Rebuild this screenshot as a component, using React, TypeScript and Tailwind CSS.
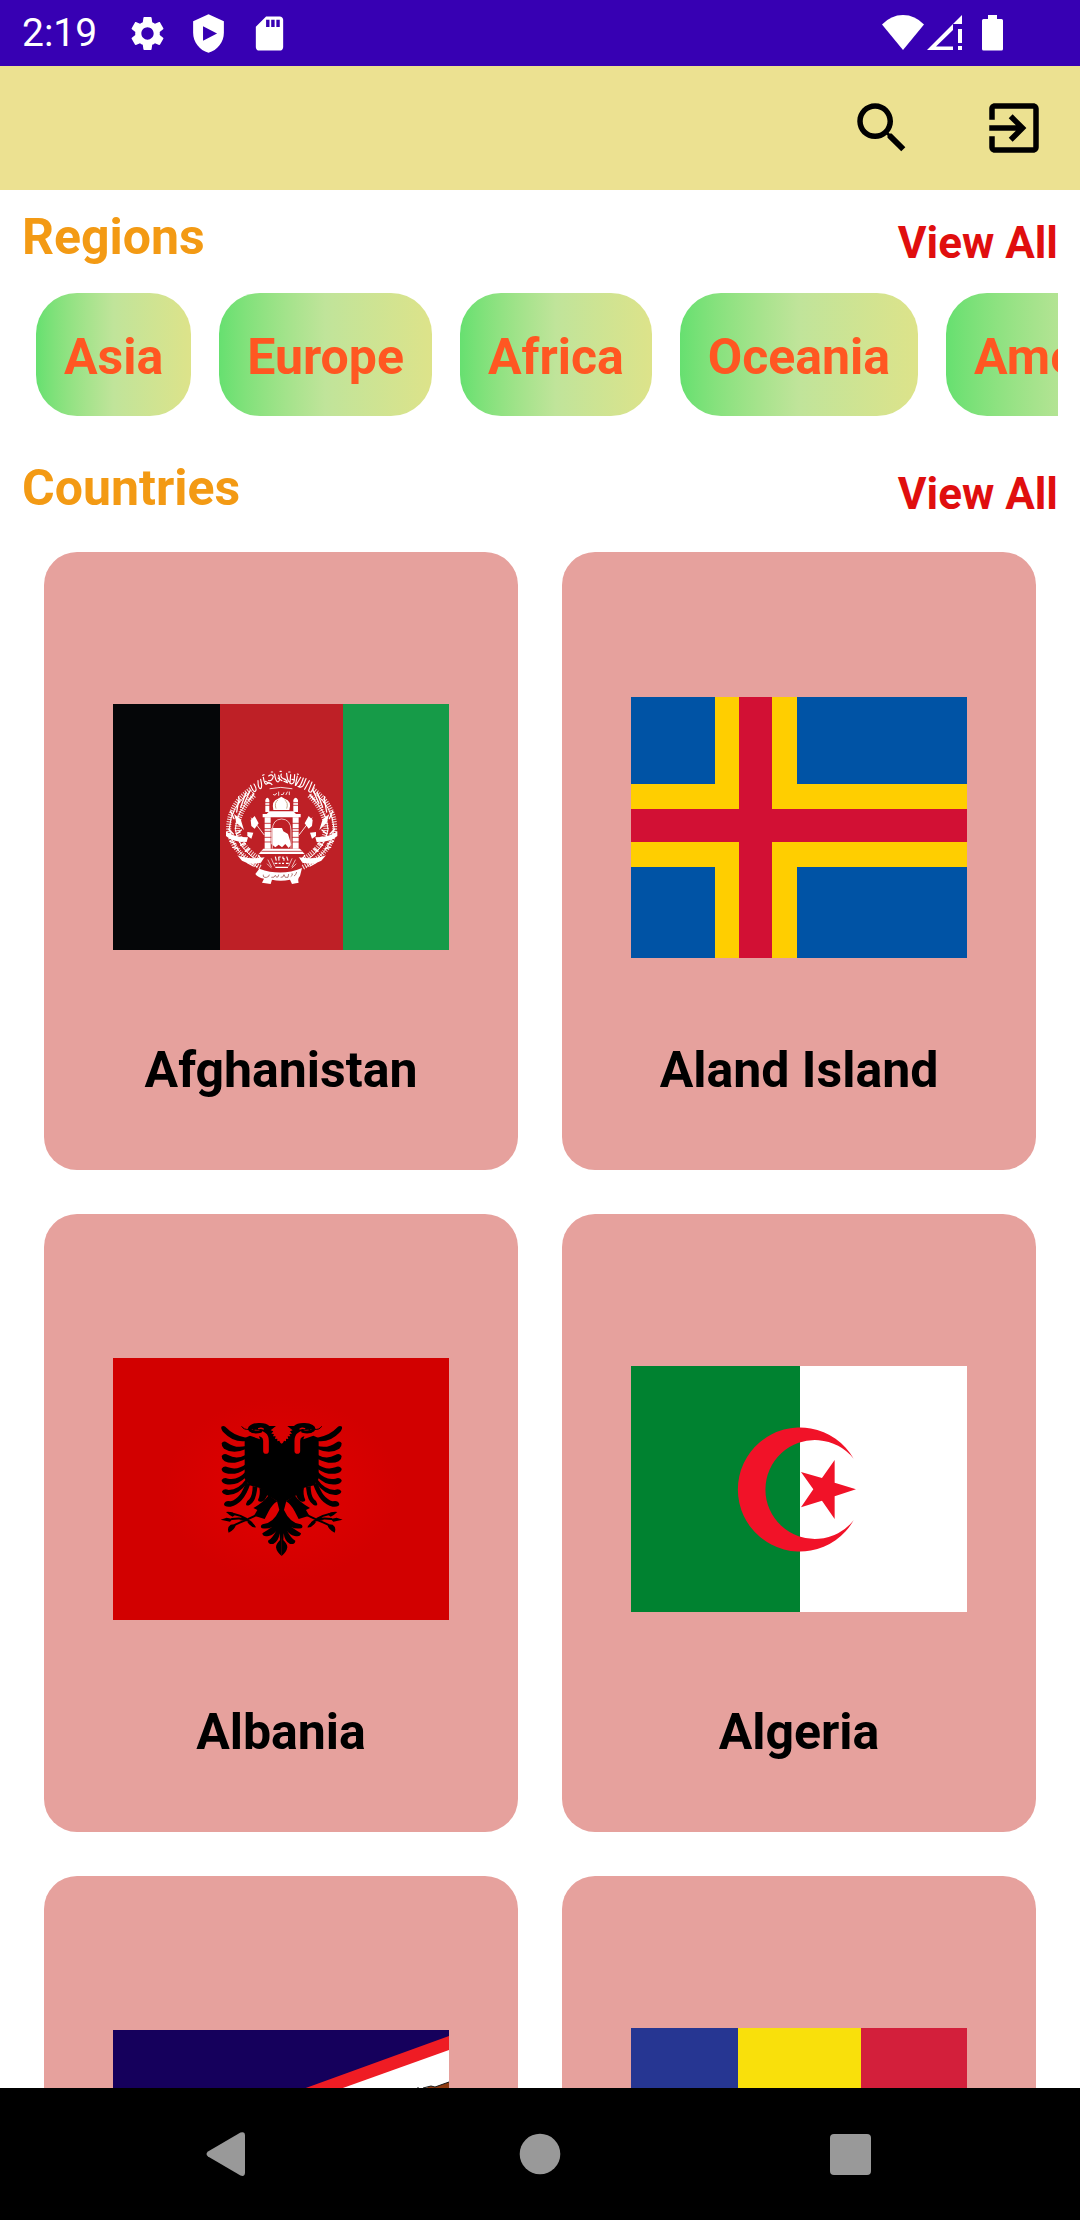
import type { ReactNode } from "react";

const regions = ["Asia", "Europe", "Africa", "Oceania", "Americas"];

function FlagFrame({ height, label, children }: { height: number; label: string; children: ReactNode }) {
  return (
    <svg viewBox={`0 0 336 ${height}`} role="img" aria-label={label} className="block w-full">
      {children}
    </svg>
  );
}

/* Left half of the wreath: wheat ears, ribbon and pennant. */
function WreathHalf() {
  return (
    <g fill="none" stroke="#fff" strokeLinecap="round">
      <path d="M118 128 Q62 170 58 235 Q62 300 140 350" strokeWidth="3" />
      <path d="M128 140 Q78 185 76 238 Q80 292 150 338" strokeWidth="3" />
      <path d="M122 118 Q56 165 56 235 Q60 304 152 352" strokeWidth="15" strokeDasharray="3 4" strokeLinecap="butt" opacity="0.85" />
      <path d="M132 136 Q84 182 82 236 Q86 290 158 334" strokeWidth="16" strokeDasharray="3 4" strokeLinecap="butt" opacity="0.85" />
      <path d="M92 172 l16 -44 M104 158 l16 -36 M80 186 l6 -34 M116 150 l14 -16 M72 206 l-10 -22 M88 158 l-2 -18" strokeWidth="4" />
      <path d="M56 238 l14 14 M56 254 l16 12 M60 274 l18 8 M68 292 l16 4 M94 240 l-14 12 M98 262 l-14 8 M106 280 l-14 6 M118 296 l-12 8 M112 338 l18 10 M146 316 l8 16" strokeWidth="4" />
      <path d="M48 244 Q70 262 114 262 L110 276 Q66 276 48 258Z M72 192 L92 208 L102 240 L80 218 Z M82 316 Q112 330 164 322 L150 338 Q118 346 96 332Z" fill="#fff" stroke="none" />
      <path d="M124 204 L162 254" strokeWidth="2.5" />
      <path d="M122 210 L134 198 L146 220 L134 236 L124 228 Z M112 246 L130 248 L124 266 L112 258 Z" fill="#fff" stroke="none" />
      <path d="M174 330 l10 20 M184 326 l10 22 M172 342 l12 12" strokeWidth="2" />
    </g>
  );
}

function AfghanistanFlag() {
  return (
    <FlagFrame height={246} label="Flag of Afghanistan">
      <rect width="336" height="246" fill="#169b48" />
      <rect width="230" height="246" fill="#be2026" />
      <rect width="107" height="246" fill="#050608" />
      <g transform="translate(97 46) scale(0.3333)">
        <WreathHalf />
        <g transform="translate(430 0) scale(-1 1)">
          <WreathHalf />
        </g>
        {/* inscription arch */}
        <g fill="none" stroke="#fff" strokeWidth="3.5" strokeLinecap="round">
          <path d="M122 106 q8 22 14 18 q6 -6 -4 -22 M144 92 q0 24 8 24 q6 -4 0 -28 M160 82 q4 24 10 20 q8 -8 16 2 M176 78 q10 -8 14 2 q-4 14 -14 12 M194 72 q2 22 10 24 q8 -4 2 -20 M214 72 q-4 10 6 14 q10 2 12 12 M230 70 q2 22 8 26 M242 74 l-2 26 q8 4 12 -4 l2 -22 M262 78 l-6 28 M272 82 l-14 24 M280 84 q-8 24 -14 26 q10 4 14 -4 l8 -20 M298 92 l-14 26 M306 96 l-10 26 M314 104 l-10 22 q-8 2 -8 -6" />
          <path d="M158 76 l4 -2 M184 66 l4 0 M210 64 l4 0 M236 66 l4 0 M262 72 l3 1 M128 128 l4 4 M166 94 l12 6 M204 84 l12 8 M222 94 l10 4 M246 88 l8 2" />
          <path d="M180 116 q32 -8 66 0 M190 134 q6 6 10 -4 M206 126 v10 M214 134 q8 2 8 -6 M232 126 l-4 8 M238 126 v8" strokeWidth="2.5" />
        </g>
        {/* mosque */}
        <g fill="#fff">
          <path d="M190 180 Q184 152 204 146 L214 140 L224 146 Q246 152 238 180Z" />
          <path d="M198 176 Q192 158 204 150 M230 176 Q236 158 224 150" stroke="#c9a88a" strokeWidth="3" fill="none" />
          <path d="M166 150 Q172 136 178 150 V186 H166Z M250 150 Q257 136 264 150 V186 H250Z" />
          <path d="M178 184 H250 L258 192 H272 V202 H158 V192 H170Z" />
          <path d="M164 202 H182 V296 H164Z M248 202 H266 V296 H248Z" />
          <path d="M184 234 L216 234 L220 244 L234 252 L244 284 L236 294 L226 282 L216 292 L206 284 L196 292 L184 282Z" />
          <path d="M160 296 H270 L284 312 H146Z" />
        </g>
        <path d="M187 296 V240 Q188 208 215 207 Q242 208 243 240 V296" stroke="#eebfbf" strokeWidth="3" fill="none" />
        <path d="M162 158 H182 M248 158 H266 M162 166 H182 M248 166 H266 M162 220 H184 M246 220 H268 M162 236 H184 M246 236 H268 M162 244 H184 M246 244 H268 M162 262 H184 M246 262 H268 M162 276 H184 M246 276 H268 M154 304 H278" stroke="#be2026" strokeWidth="2.5" />
        <path d="M196 320 l3 12 M206 320 l1 12 M206 321 h6 M220 320 q-4 6 2 6 v6 M234 332 l-4 -12 M194 340 h8 M206 340 h6 M216 340 h6 M228 340 h8 M196 352 h38" stroke="#fff" strokeWidth="3.5" fill="none" />
        {/* scroll */}
        <path d="M148 356 Q214 380 276 354 L270 378 Q262 386 266 398 L246 402 L240 389 Q212 395 186 389 L182 402 L156 398 L162 386 Q142 382 136 372Z" fill="#fff" />
        <path d="M160 374 q-2 10 10 8 q8 -2 8 -8 M184 382 q10 2 12 -6 l4 6 q6 0 6 -8 M212 382 q8 2 10 -8 l4 8 h8 l2 -10 M242 380 q8 -4 4 -10 M252 378 q6 -2 8 -12" stroke="#8f3a34" strokeWidth="2" fill="none" />
      </g>
    </FlagFrame>
  );
}

function AlandFlag() {
  return (
    <FlagFrame height={261} label="Flag of Aland Island">
      <rect width="336" height="261" fill="#0053a5" />
      <path d="M84 0H166V87H336V170H166V261H84V170H0V87H84Z" fill="#ffce00" />
      <path d="M108 0H141V112H336V145H141V261H108V145H0V112H108Z" fill="#d21034" />
    </FlagFrame>
  );
}

/* Left half of the double-headed eagle, mirrored to complete it. */
function EagleHalf() {
  return (
    <g>
      <path
        d="M216 132 L211 128 L208 122 L202 124 L202 116 L195 117 L197 109 L189 109 L192 102 L184 101 L190 94 L182 91 L198 78 L178 78 Q170 69 150 69 Q132 68 122 75 Q112 80 114 90 L126 87 L136 94 L118 92 Q132 104 146 106 L150 118 L120 107 L104 114 L104 236 L118 256 L150 264 L160 280 L182 292 L201 303 L208 330 L206 362 L216 420Z"
        fill="#000"
      />
      <path d="M136 98 Q168 100 168 122 V153" fill="none" stroke="#dc0000" strokeWidth="17" strokeLinecap="round" />
      <path d="M120 90 Q132 99 152 94" fill="none" stroke="#000" strokeWidth="9" strokeLinecap="round" />
      <path d="M146 86 q8 -3 14 1" fill="none" stroke="#dc0000" strokeWidth="4" strokeLinecap="round" />
      <path d="M95 79 Q102 90 116 88" fill="none" stroke="#000" strokeWidth="3" />
      {/* wing feathers */}
      <g fill="#000">
        <path d="M34 80 Q42 74 50 84 Q70 106 108 113 V123 Q70 128 42 98 Q32 88 34 80Z" />
        <path d="M35 130 Q40 120 52 128 Q76 146 108 138 V147 Q70 164 42 146 Q34 138 35 130Z" />
        <path d="M35 168 Q42 158 54 165 Q80 180 108 164 V176 Q70 196 44 184 Q34 176 35 168Z" />
        <path d="M35 206 Q42 196 54 202 Q82 212 108 192 V206 Q76 228 46 219 Q34 214 35 206Z" />
        <path d="M35 240 Q42 230 54 236 Q84 242 108 214 V231 Q80 260 46 252 Q34 248 35 240Z" />
        <path d="M36 274 Q42 264 56 270 Q86 270 108 238 L114 246 Q84 288 50 285 Q36 282 36 274Z" />
        <path d="M42 312 Q46 300 62 304 Q92 296 108 246 L120 254 Q100 312 62 320 Q42 322 42 312Z" />
        <path d="M108 312 Q108 304 118 298 Q128 286 128 258 L142 262 Q138 304 120 314 Q108 320 108 312Z" />
        <path d="M144 300 Q152 284 148 262 L172 284 Q166 302 154 305 Q144 306 144 300Z" />
      </g>
      {/* leg and claws */}
      <path d="M176 286 L202 304 Q186 314 176 334 L164 357 L132 347 L142 330 L130 324 Q160 308 176 286Z" fill="#000" />
      <g fill="none" stroke="#000" strokeWidth="6" strokeLinecap="round">
        <path d="M142 344 L104 362 Q92 366 76 374 M110 358 Q90 354 66 357 M108 356 Q92 346 74 343 M92 358 Q116 360 124 368" />
      </g>
      <path d="M32 359 L50 353 L68 357 L60 365 L46 362Z M48 336 Q66 334 78 343 L68 350 Q58 346 48 336Z M56 398 Q50 382 62 374 L78 372 Q76 388 56 398Z M112 366 Q128 362 138 382 Q124 384 112 366Z" fill="#000" />
      {/* tail */}
      <path d="M208 330 Q190 370 158 373 Q148 378 156 385 Q176 388 187 380 Q170 392 157 400 Q158 412 176 408 Q192 404 199 392 Q186 416 174 422 Q174 434 190 432 Q206 424 209 400 L210 420 Q198 432 198 442 Q200 456 215 468 V330Z" fill="#000" />
    </g>
  );
}

function AlbaniaFlag() {
  return (
    <FlagFrame height={262} label="Flag of Albania">
      <defs>
        <radialGradient id="albania-field">
          <stop offset="0" stopColor="#e20000" />
          <stop offset="0.7" stopColor="#d20000" />
        </radialGradient>
      </defs>
      <rect width="336" height="262" fill="url(#albania-field)" />
      <g transform="translate(97 42) scale(0.3333)">
        <EagleHalf />
        <g transform="translate(430 0) scale(-1 1)">
          <EagleHalf />
        </g>
      </g>
    </FlagFrame>
  );
}

function AlgeriaFlag() {
  return (
    <FlagFrame height={246} label="Flag of Algeria">
      <rect width="336" height="246" fill="#fff" />
      <rect width="169" height="246" fill="#008230" />
      <g transform="translate(-10 -16) scale(0.3333)" fill="#f11228">
        <path d="M698 326A186 186 0 1 0 698 511A148.500 148.500 0 1 1 698 326Z" />
        <path d="M705 418L641 398V330L603 384L540 366L577 418L540 472L603 452L641 507V439Z" />
      </g>
    </FlagFrame>
  );
}

function AmericanSamoaFlag() {
  return (
    <FlagFrame height={242} label="Flag of American Samoa">
      <rect width="336" height="242" fill="#15005c" />
      <path d="M0 121L0 128L336 6V236L0 121Z" fill="#ef1c24" />
      <path d="M54 121L336 20V222Z" fill="#fff" />
      <path d="M310 59L318 56L322 57L336 52V130L290 110L314 84Z" fill="#8f3b12" />
      <path d="M310 58L318 56L322 57L336 52M305 57v2" stroke="#1a1a1a" strokeWidth="1" fill="none" />
    </FlagFrame>
  );
}

function AndorraFlag() {
  return (
    <FlagFrame height={246} label="Flag of Andorra">
      <rect width="336" height="246" fill="#d31f3b" />
      <rect width="230" height="246" fill="#f9e00b" />
      <rect width="107" height="246" fill="#263692" />
    </FlagFrame>
  );
}

const countries = [
  { name: "Afghanistan", Flag: AfghanistanFlag },
  { name: "Aland Island", Flag: AlandFlag },
  { name: "Albania", Flag: AlbaniaFlag },
  { name: "Algeria", Flag: AlgeriaFlag },
  { name: "American Samoa", Flag: AmericanSamoaFlag },
  { name: "Andorra", Flag: AndorraFlag },
];

function StatusBar() {
  return (
    <div className="flex h-[66px] shrink-0 items-center bg-[#3700b3] pr-[76px] pl-[22px] text-white">
      <span className="text-[39px] leading-[46px]">2:19</span>
      <div className="ml-[30px] flex items-center gap-5">
        <svg viewBox="0 0 24 24" className="size-[41px]" fill="currentColor" aria-hidden="true">
          <path d="M19.140 12.940c.04-.3.06-.61.06-.94 0-.32-.02-.64-.07-.94l2.030-1.580c.18-.14.23-.41.120-.61l-1.920-3.320c-.12-.22-.37-.29-.59-.22l-2.390.96c-.5-.38-1.030-.7-1.620-.94l-.36-2.540c-.04-.24-.24-.41-.48-.41h-3.840c-.24 0-.43.17-.47.41l-.36 2.540c-.59.24-1.130.57-1.620.94l-2.390-.96c-.22-.08-.47 0-.59.22L2.740 8.870c-.12.21-.08.47.12.61l2.030 1.580c-.05.3-.09.63-.09.94s.02.64.07.94l-2.030 1.580c-.18.14-.23.41-.12.61l1.920 3.320c.12.22.37.29.59.22l2.390-.96c.5.38 1.030.7 1.620.94l.36 2.540c.05.24.24.41.48.41h3.840c.24 0 .44-.17.47-.41l.36-2.540c.59-.24 1.130-.56 1.620-.94l2.390.96c.22.08.47 0 .59-.22l1.920-3.320c.12-.22.07-.47-.12-.61l-2.010-1.580zM12 15.600c-1.980 0-3.600-1.620-3.600-3.600s1.620-3.600 3.600-3.600 3.600 1.620 3.600 3.600-1.620 3.600-3.600 3.600z" />
        </svg>
        <svg viewBox="0 0 24 24" className="size-[41px]" fill="currentColor" fillRule="evenodd" aria-hidden="true">
          <path d="M12 .8L21 4.800V11.500C21 17 17.200 21.800 12 23.200C6.800 21.800 3 17 3 11.500V4.800ZM8.800 7.800V16.200L17 12Z" />
        </svg>
        <svg viewBox="0 0 24 24" className="size-[41px]" fill="currentColor" fillRule="evenodd" aria-hidden="true">
          <path d="M18 2h-8L4 8v12c0 1.100.9 2 2 2h12c1.100 0 2-.9 2-2V4c0-1.100-.9-2-2-2zM10 4h2v4.200h-2zM13 4h2v4.200h-2zM16 4h2v4.200h-2z" />
        </svg>
      </div>
      <div className="ml-auto flex items-center">
        <svg viewBox="0 0 42 36" className="h-[36px] w-[42px]" fill="currentColor" aria-hidden="true">
          <path d="M0 9.500Q9 0 21 0T42 9.500L21 35Z" />
        </svg>
        <svg viewBox="0 0 36 36" className="ml-[3px] h-[36px] w-[36px]" fill="currentColor" aria-hidden="true">
          <path fillRule="evenodd" d="M0 35L35 0V9H26V15L9 31.500H26V35Z" />
          <path d="M31 14h4v14h-4zM31 31h4v4h-4z" />
        </svg>
        <svg viewBox="0 0 22 36" className="ml-[19px] h-[36px] w-[22px]" fill="currentColor" aria-hidden="true">
          <path d="M6 0h9v4h4.500Q21 4 21 5.500v28.500Q21 35.500 19.500 35.500h-18Q0 35.500 0 34V5.500Q0 4 1.500 4H6Z" />
        </svg>
      </div>
    </div>
  );
}

function Toolbar() {
  return (
    <header className="flex h-[124px] shrink-0 items-center justify-end gap-[66px] bg-[#ece191] px-[33px] text-black">
      <button type="button" aria-label="Search">
        <svg viewBox="0 0 24 24" className="size-[66px]" fill="currentColor">
          <path d="M15.500 14h-.79l-.28-.27C15.410 12.590 16 11.110 16 9.500 16 5.910 13.090 3 9.500 3S3 5.910 3 9.500 5.910 16 9.500 16c1.610 0 3.090-.59 4.230-1.570l.27.28v.79l5 4.990L20.490 19l-4.990-5zm-6 0C7.010 14 5 11.990 5 9.500S7.010 5 9.500 5 14 7.010 14 9.500 11.990 14 9.500 14z" />
        </svg>
      </button>
      <button type="button" aria-label="Log out">
        <svg viewBox="0 0 24 24" className="size-[66px]" fill="currentColor">
          <path d="M10.090 15.590L11.500 17l5-5-5-5-1.410 1.410L12.670 11H3v2h9.670l-2.580 2.590zM19 3H5c-1.110 0-2 .9-2 2v4h2V5h14v14H5v-4H3v4c0 1.100.89 2 2 2h14c1.100 0 2-.9 2-2V5c0-1.100-.9-2-2-2z" />
        </svg>
      </button>
    </header>
  );
}

function SectionHeader({ title }: { title: string }) {
  return (
    <div className="flex items-start justify-between">
      <h2 className="text-[50px] leading-[60px] font-bold text-[#f39a14]">{title}</h2>
      <button type="button" className="mt-[10px] text-[44px] leading-[52px] font-bold text-[#e00e0e]">
        View All
      </button>
    </div>
  );
}

function NavigationBar() {
  return (
    <nav className="grid h-[132px] shrink-0 grid-cols-3 items-center justify-items-center bg-black px-[73px] text-[#999999]">
      <button type="button" aria-label="Back">
        <svg viewBox="0 0 66 66" className="size-[66px]" fill="currentColor">
          <path d="M12 30.500L44.500 11.500Q49 10 49 14.500V51.500Q49 56 44.500 54.500L12 35.500Q9 33 12 30.500Z" />
        </svg>
      </button>
      <button type="button" aria-label="Home">
        <svg viewBox="0 0 66 66" className="size-[66px]" fill="currentColor">
          <circle cx="33" cy="33" r="20.300" />
        </svg>
      </button>
      <button type="button" aria-label="Recent apps">
        <svg viewBox="0 0 66 66" className="size-[66px]" fill="currentColor">
          <rect x="12" y="13" width="41" height="41" rx="4" />
        </svg>
      </button>
    </nav>
  );
}

export default function App() {
  return (
    <div className="flex h-screen flex-col overflow-hidden bg-white font-[Roboto,sans-serif]">
      <StatusBar />
      <Toolbar />
      <main className="min-h-0 flex-1 overflow-y-auto px-[22px] pt-[17px] [scrollbar-width:none]">
        <section>
          <SectionHeader title="Regions" />
          <div className="mt-6 flex gap-7 overflow-x-auto pl-[14px] [scrollbar-width:none]">
            {regions.map((region) => (
              <button
                key={region}
                type="button"
                className="shrink-0 rounded-[41px] bg-linear-to-r from-[#66e070] via-[#c0e49a] to-[#dde38a] px-7 pt-[34px] pb-[29px] text-[50px] leading-[60px] font-bold text-[#ff5722]"
              >
                {region}
              </button>
            ))}
          </div>
        </section>
        <section className="mt-[42px]">
          <SectionHeader title="Countries" />
          <div className="mt-8 grid grid-cols-2 gap-[44px] px-[22px]">
            {countries.map(({ name, Flag }) => (
              <article key={name} className="rounded-[33px] bg-[#e6a19d] pt-[107px] pb-[70px]">
                <div className="mx-[69px] flex aspect-square items-center">
                  <Flag />
                </div>
                <h3 className="mt-[45px] text-center text-[50px] leading-[60px] font-bold text-black">{name}</h3>
              </article>
            ))}
          </div>
        </section>
      </main>
      <NavigationBar />
    </div>
  );
}
